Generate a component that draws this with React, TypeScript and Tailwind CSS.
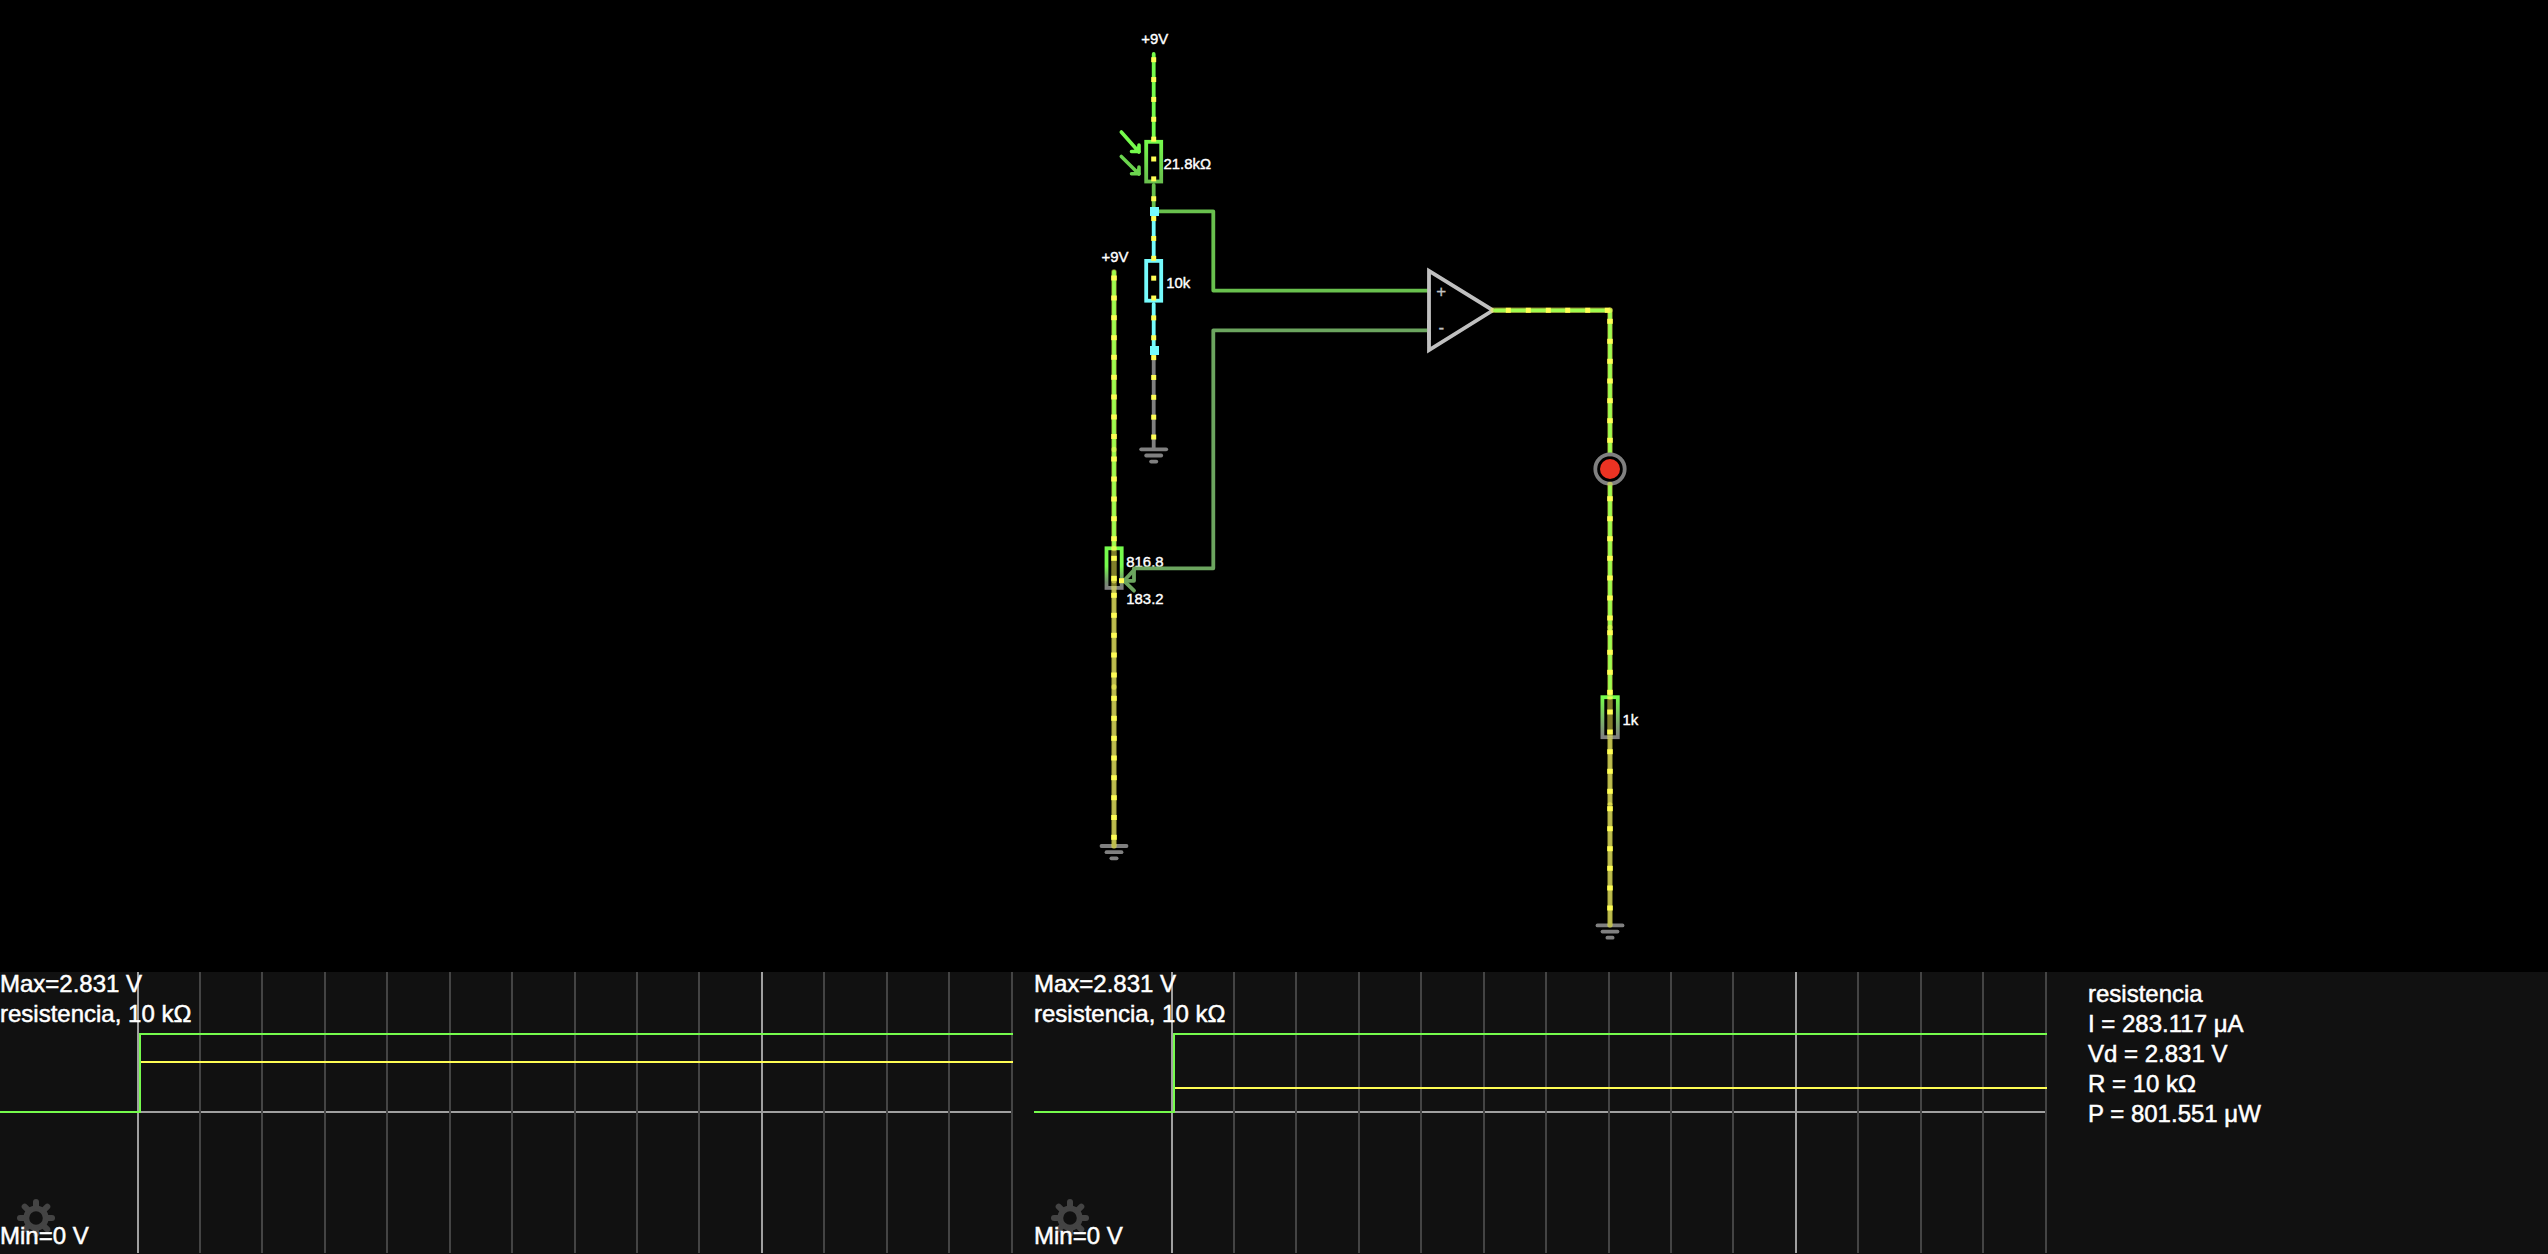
const GREEN = '#75fb4c';
const YELLOW = '#fffd54';
const CYAN = '#75fbfd';
const GREY = '#808080';
const MID_GREEN = '#69c04e';
const DULL_GREEN = '#6ca55f';
/* Wire colours that sit beneath the translucent current band */
const FLOW_GREEN = '#41fb48';
const FLOW_GREY = '#7d7d48';

type Point = [number, number];

const COLUMN_A_DOTS = Array.from({ length: 20 }, (_, i) => 59.7 + i * 19.86);
const COLUMN_B_DOTS = [
  278, 298, 317.7, 337.7, 357.3, 377.3, 397, 417, 436.5, 459, 479, 499, 518.7, 538.7, 558.3, 578.3,
  595.3, 615.3, 635.3, 655, 675, 698.3, 718.3, 738.3, 758, 777.7, 797.7, 817.5, 837.3,
];
const COLUMN_C_DOTS = [
  321.3, 341.3, 361.3, 381, 400.7, 420.7, 440.3, 498.7, 518.7, 538.7, 558.3, 578, 598, 618, 632.7,
  652.3, 672.3, 692.3, 712, 732, 751.7, 771.3, 791.3, 808.7, 828.7, 848.7, 868.3, 888, 908,
];
const OUTPUT_DOTS = [1508.3, 1528.3, 1548.3, 1567.7, 1587.7, 1607.3];

function Wire({ points, color, width = 3.8 }: { points: Point[]; color: string; width?: number }) {
  return (
    <polyline
      points={points.map((p) => p.join(',')).join(' ')}
      fill="none"
      stroke={color}
      strokeWidth={width}
      strokeLinecap="round"
      strokeLinejoin="round"
    />
  );
}

/* Translucent current band drawn over a wire */
function Flow({ from, to, cap = 'round' }: { from: Point; to: Point; cap?: 'round' | 'butt' }) {
  return (
    <line
      x1={from[0]}
      y1={from[1]}
      x2={to[0]}
      y2={to[1]}
      stroke={YELLOW}
      strokeOpacity={0.5}
      strokeWidth={5.4}
      strokeLinecap={cap}
    />
  );
}

function Dot({ x, y, w = 5 }: { x: number; y: number; w?: number }) {
  return <rect x={x - w / 2} y={y - 2.5} width={w} height={5} fill={YELLOW} />;
}

function Ground({ x, y }: { x: number; y: number }) {
  return (
    <g stroke={GREY} strokeWidth={3.8} strokeLinecap="round">
      <line x1={x - 12.5} x2={x + 12.5} y1={y} y2={y} />
      <line x1={x - 7.5} x2={x + 7.5} y1={y + 6.2} y2={y + 6.2} />
      <line x1={x - 2.6} x2={x + 2.6} y1={y + 12.3} y2={y + 12.3} />
    </g>
  );
}

function Circuit() {
  return (
    <svg className="block h-[972px] w-full" viewBox="0 0 2548 972">
      <defs>
        <linearGradient id="ldr" x1="0" y1="0" x2="0" y2="1">
          <stop offset="0" stopColor={GREEN} />
          <stop offset="1" stopColor={MID_GREEN} />
        </linearGradient>
        <linearGradient id="load" x1="0" y1="0" x2="0" y2="1">
          <stop offset="0" stopColor={GREEN} />
          <stop offset="1" stopColor={GREY} />
        </linearGradient>
        <linearGradient id="pot" x1="0" y1="0" x2="0" y2="1">
          <stop offset="0" stopColor={GREEN} />
          <stop offset="0.45" stopColor={GREEN} />
          <stop offset="0.85" stopColor="#748f6e" />
          <stop offset="1" stopColor={GREY} />
        </linearGradient>
      </defs>

      {/* Light sensor divider */}
      <Wire points={[[1153.7, 54], [1153.7, 140]]} color={GREEN} />
      <Wire points={[[1153.7, 185], [1153.7, 211]]} color={MID_GREEN} />
      <rect x={1146.2} y={141.8} width={15} height={39.7} fill="none" stroke="url(#ldr)" strokeWidth={3.8} />
      <Wire points={[[1121.3, 132], [1139, 152]]} color={GREEN} width={3.6} />
      <Wire points={[[1131.5, 151.5], [1139, 151.5], [1139, 145]]} color={GREEN} width={3.6} />
      <polygon points="1132,152 1140,152 1140,144" fill={GREEN} />
      <Wire points={[[1121.3, 156.5], [1139, 174]]} color="#6bd44e" width={3.6} />
      <Wire points={[[1131.5, 173.7], [1139, 173.7], [1139, 167]]} color="#6bd44e" width={3.6} />
      <polygon points="1132,174 1140,174 1140,166" fill="#6bd44e" />

      <Wire points={[[1153.7, 211.3], [1213.3, 211.3], [1213.3, 290.6], [1429, 290.6]]} color={MID_GREEN} />
      <Wire points={[[1153.7, 213], [1153.7, 259]]} color={CYAN} />
      <Wire points={[[1153.7, 304], [1153.7, 350]]} color={CYAN} />
      <rect x={1146.2} y={260.9} width={15} height={39.8} fill="none" stroke={CYAN} strokeWidth={3.8} />
      <Wire points={[[1153.7, 352], [1153.7, 449]]} color={GREY} />
      <Ground x={1153.7} y={449.3} />
      {COLUMN_A_DOTS.map((y) => (
        <Dot key={y} x={1153.7} y={y} />
      ))}
      <rect x={1150} y={207} width={9} height={9} fill={CYAN} />
      <rect x={1150} y={346} width={9} height={9} fill={CYAN} />

      {/* Potentiometer branch */}
      <Wire points={[[1114, 271.8], [1114, 546]]} color={FLOW_GREEN} />
      <Ground x={1114} y={846} />
      <Wire points={[[1114, 590], [1114, 846]]} color={FLOW_GREY} />
      <rect x={1106.5} y={548.3} width={15.2} height={39.6} fill="none" stroke="url(#pot)" strokeWidth={3.8} />
      <Flow from={[1114, 272]} to={[1114, 449.5]} />
      <Flow from={[1114, 449.5]} to={[1114, 548.5]} />
      <Flow from={[1114, 548.5]} to={[1114, 580.8]} />
      <Flow from={[1114, 580.8]} to={[1114, 687]} />
      <Flow from={[1114, 687]} to={[1114, 846]} />
      {COLUMN_B_DOTS.map((y) => (
        <Dot key={y} x={1114} y={y} w={5.6} />
      ))}

      {/* Comparator */}
      <polygon points="1429,270.8 1493,310.3 1429,350" fill="none" stroke="#c0c0c0" strokeWidth={3.8} />
      <Wire points={[[1495, 310.3], [1610, 310.3], [1610, 453]]} color={FLOW_GREEN} />
      <Flow from={[1493, 310.3]} to={[1610, 310.3]} />
      <Flow from={[1610, 310.3]} to={[1610, 453.5]} />
      {OUTPUT_DOTS.map((x) => (
        <Dot key={x} x={x} y={310.3} />
      ))}

      {/* LED and load resistor */}
      <Wire points={[[1610, 485], [1610, 694]]} color={FLOW_GREEN} />
      <circle cx={1610} cy={469} r={14.7} fill="none" stroke={GREY} strokeWidth={3.8} />
      <circle cx={1610} cy={469} r={10} fill="#eb3323" />
      <Ground x={1610} y={925.4} />
      <Wire points={[[1610, 740], [1610, 925]]} color={FLOW_GREY} />
      <rect x={1602.4} y={697.2} width={15.4} height={40} fill="none" stroke="url(#load)" strokeWidth={3.8} />
      <Flow from={[1610, 484.5]} to={[1610, 627.5]} />
      <Flow from={[1610, 627.5]} to={[1610, 697]} />
      <Flow from={[1610, 697]} to={[1610, 737.5]} cap="butt" />
      <Flow from={[1610, 737.5]} to={[1610, 805]} cap="butt" />
      <Flow from={[1610, 805]} to={[1610, 925]} />
      {COLUMN_C_DOTS.map((y) => (
        <Dot key={y} x={1610} y={y} w={5.6} />
      ))}

      {/* Labels */}
      <g fill="#ffffff" stroke="#ffffff" strokeWidth={0.4} fontSize={14.9}>
        <text x={1154.7} y={44} textAnchor="middle">+9V</text>
        <text x={1115} y={262} textAnchor="middle">+9V</text>
        <text x={1163.5} y={169}>21.8kΩ</text>
        <text x={1166.3} y={288}>10k</text>
        <text x={1126.3} y={566.7}>816.8</text>
        <text x={1126.3} y={604}>183.2</text>
        <text x={1622.5} y={724.7}>1k</text>
      </g>
      <g fill="#c0c0c0" stroke="#c0c0c0" strokeWidth={0.3} fontSize={17} textAnchor="middle">
        <text x={1441.3} y={297}>+</text>
        <text x={1441.3} y={333.3}>-</text>
      </g>

      {/* Wiper lead */}
      <Wire points={[[1429, 330.3], [1213.3, 330.3], [1213.3, 568.3], [1134, 568.3], [1134, 580.8], [1124, 580.8]]} color={DULL_GREEN} />
      <Wire points={[[1134, 570], [1124, 580.8], [1134, 590.7]]} color={DULL_GREEN} />
      <Dot x={1121.5} y={580.7} />
      <line x1={1429} y1={320} x2={1429} y2={340} stroke="#c0c0c0" strokeWidth={3.8} />
    </svg>
  );
}

function Gear() {
  return (
    <g transform="translate(36 246)" stroke="#444444" fill="none">
      <circle r={9.7} strokeWidth={5.8} />
      {[0, 45, 90, 135, 180, 225, 270, 315].map((angle) => (
        <line key={angle} y1={-11} y2={-16} strokeWidth={6} strokeLinecap="round" transform={`rotate(${angle})`} />
      ))}
    </g>
  );
}

function Scope({ currentY }: { currentY: number }) {
  return (
    <section className="relative flex h-[282px] w-[1034px] flex-col justify-between">
      <svg className="absolute inset-0 h-full w-full" viewBox="0 0 1034 282">
        <rect x={0} y={139} width={1011} height={2} fill="#a0a0a0" />
        {Array.from({ length: 15 }, (_, i) => (
          <rect
            key={i}
            x={Math.floor(137 + i * 62.43)}
            y={0}
            width={2}
            height={281}
            fill={i % 10 === 0 ? '#a0a0a0' : '#444444'}
          />
        ))}
        <rect x={141} y={currentY} width={872} height={2} fill={YELLOW} />
        <path d="M0 140H140V62H1013" fill="none" stroke={GREEN} strokeWidth={2} />
        <Gear />
      </svg>
      <div className="relative -mt-[3px] text-2xl leading-[30px]">
        <p>Max=2.831 V</p>
        <p>resistencia, 10 kΩ</p>
      </div>
      <p className="relative pb-[3px] text-2xl leading-[30px]">Min=0 V</p>
    </section>
  );
}

export default function App() {
  return (
    <main className="flex h-[1254px] w-[2548px] flex-col overflow-hidden bg-black font-['Liberation_Sans',Arial,sans-serif] text-white">
      <Circuit />
      <div className="flex h-[282px] bg-[#111111] [-webkit-text-stroke:0.5px_white]">
        <Scope currentY={89} />
        <Scope currentY={115} />
        <aside className="pt-[7px] pl-5 text-2xl leading-[30px]">
          <p>resistencia</p>
          <p>I = 283.117 μA</p>
          <p>Vd = 2.831 V</p>
          <p>R = 10 kΩ</p>
          <p>P = 801.551 μW</p>
        </aside>
      </div>
    </main>
  );
}
